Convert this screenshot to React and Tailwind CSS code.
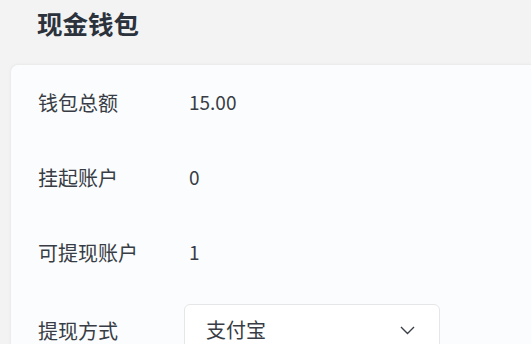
import React from "react";

function Row({ label, children, tall }) {
  return (
    <div className={`flex items-center ${tall ? "h-[82px]" : "h-[75px]"}`}>
      <span className="w-[146px] shrink-0">{label}</span>
      {children}
    </div>
  );
}

function App() {
  return (
    <div
      className="h-[344px] bg-[#f3f3f3] text-[#383d45] overflow-hidden"
      style={{ fontFamily: '"Noto Sans CJK SC", "Noto Sans", sans-serif' }}
    >
      <h1 className="h-[64px] pl-[37px] pt-[5px] text-[25.5px] font-bold text-[#2b323c] leading-[36px]">
        现金钱包
      </h1>
      <div className="ml-[10px] bg-[#fbfcfd] rounded-tl-[8px] border-t border-l border-[#ececec] shadow-[0_0_3px_rgba(0,0,0,0.04)] px-[27px] text-[20px] h-[300px]">
        <Row label="钱包总额">
          <span className="ml-[5px] text-[19px]">15.00</span>
        </Row>
        <Row label="挂起账户">
          <span className="ml-[5px] text-[19px]">0</span>
        </Row>
        <Row label="可提现账户">
          <span className="ml-[5px] text-[19px]">1</span>
        </Row>
        <Row label="提现方式" tall>
          <div className="flex items-center justify-between w-[256px] h-[52px] border border-[#e4e6e8] rounded-[6px] bg-white pl-[21px] pr-[24px] -mt-[2px]">
            <span>支付宝</span>
            <svg width="15" height="9" viewBox="0 0 15 9" fill="none" stroke="#3a3f47" strokeWidth="1.4">
              <path d="M1 1l6.5 6.5L14 1" />
            </svg>
          </div>
        </Row>
      </div>
    </div>
  );
}

export default App;
